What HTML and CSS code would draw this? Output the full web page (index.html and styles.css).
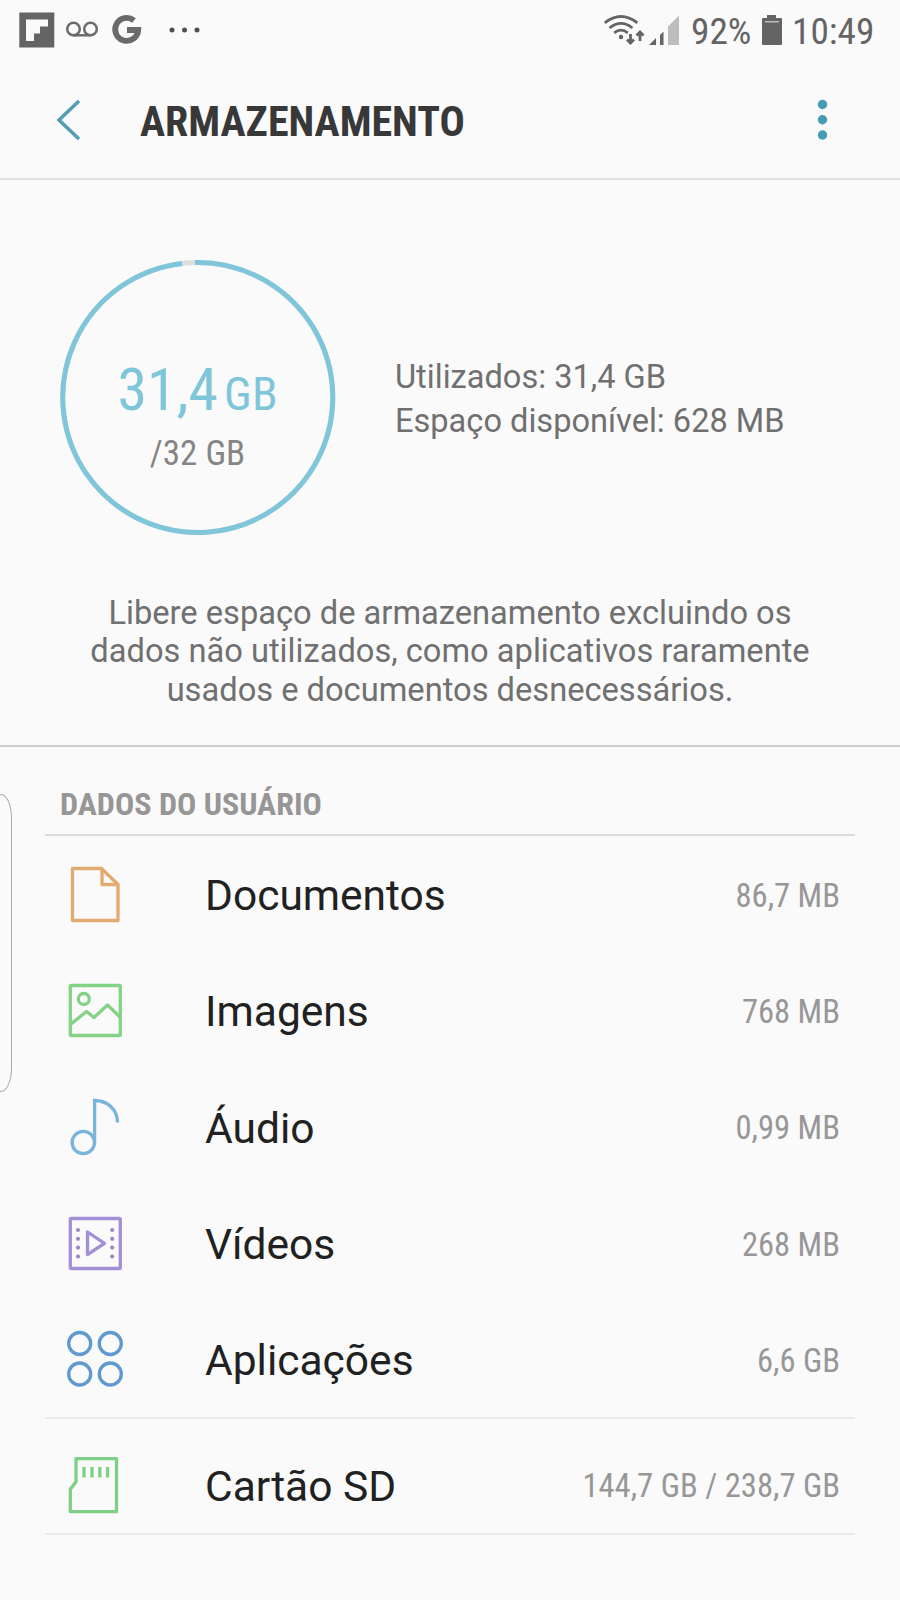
FILE: index.html
```html
<!DOCTYPE html>
<html lang="pt-BR">
<head>
<meta charset="utf-8">
<title>Armazenamento</title>
<link rel="stylesheet" href="styles.css">
</head>
<body>
<div class="screen">
  <header class="status">
    <svg class="status-left" width="210" height="60" viewBox="0 0 210 60">
      <path fill="#646464" fill-rule="evenodd" d="M19.300 12.500h35v35h-35zM26 19.500v21.500h8v-7.500h6v-7h8v-7z"/>
      <g fill="none" stroke="#6b6b6b" stroke-width="2.500"><circle cx="73.500" cy="29" r="6.300"/><circle cx="90.500" cy="29" r="6.300"/><path d="M73 35.300h18"/></g>
      <path fill="none" stroke="#6a6a6a" stroke-width="5.800" d="M134 20.500A11.500 11.500 0 1 0 138.200 30H127"/>
      <g fill="#505050"><circle cx="172" cy="30" r="2.500"/><circle cx="184.500" cy="30" r="2.500"/><circle cx="197" cy="30" r="2.500"/></g>
    </svg>
    <div class="status-right">
      <svg width="90" height="60" viewBox="600 0 90 60">
        <g fill="none" stroke="#646464" stroke-width="2.800">
          <path d="M604.800 22.800Q621 10.200 637.300 22.800M609.500 28Q621 18.800 632.500 28M614.200 32.800Q621 27.500 627.800 32.800"/>
          <path d="M630.500 34v9M627 39.500l3.500 3.500 3.500-3.500M640 41v-9M636.500 35.500l3.500-3.500 3.500 3.500"/>
        </g>
        <circle cx="621" cy="37" r="2.200" fill="#646464"/>
        <path fill="#646464" d="M649 45h7v-7zM660 45h3.500V31.500L660 35z"/>
        <path fill="#bdbdbd" d="M668 45h11V15.500l-11 11z"/>
      </svg>
      <span class="cond battery-text">92%</span>
      <svg class="battery" width="20" height="30" viewBox="0 0 20 30"><path fill="#646464" d="M5 0h9v3h5a1 1 0 0 1 1 1v25a1 1 0 0 1-1 1H1a1 1 0 0 1-1-1V4a1 1 0 0 1 1-1h4z"/><path fill="#bbb" d="M3 6h14v1.500H3z"/></svg>
      <span class="cond clock">10:49</span>
    </div>
  </header>
  <nav class="appbar">
    <svg class="back" width="30" height="44" viewBox="0 0 30 44"><path d="M24 3 4 22l20 19" fill="none" stroke="#529fb4" stroke-width="3.500"/></svg>
    <h1 class="cond title">ARMAZENAMENTO</h1>
    <svg class="more" width="12" height="44" viewBox="0 0 12 44" fill="#469bb5"><circle cx="6.500" cy="6.500" r="4.700"/><circle cx="6.500" cy="21.700" r="4.700"/><circle cx="6.500" cy="37" r="4.700"/></svg>
  </nav>
  <section class="summary">
    <div class="usage">
      <div class="ring">
        <svg class="ring-art" width="277" height="277" viewBox="-0.500 -0.500 277 277" fill="none" stroke-width="5">
          <circle cx="138" cy="138" r="135" stroke="#dedede"/>
          <path d="M135.500 3A135 135 0 1 1 122.500 3.900" stroke="#80c6da"/>
        </svg>
        <div class="cond used"><span class="used-num">31,4</span><span class="used-unit">GB</span></div>
        <div class="cond total">/32 GB</div>
      </div>
      <div class="facts"><div class="fact">Utilizados: 31,4 GB</div><div class="fact">Espaço disponível: 628 MB</div></div>
    </div>
    <p class="hint">Libere espaço de armazenamento excluindo os<br>dados não utilizados, como aplicativos raramente<br>usados e documentos desnecessários.</p>
  </section>
  <main class="data">
    <h2 class="section-title"><span class="cond">DADOS DO USUÁRIO</span></h2>
    <div class="row"><svg class="icon" width="60" height="60" viewBox="65 865 60 60" fill="none" stroke="#e2aa70" stroke-width="3.300"><path stroke-linejoin="round" d="M73 868.500h28.500l16.500 16V920.500H72.500V868.500zM102 869v15.500h15.500"/></svg><span class="name">Documentos</span><span class="cond size">86,7 MB</span></div>
    <div class="row"><svg class="icon" width="60" height="60" viewBox="65 981 60 60" fill="none" stroke="#83d286" stroke-width="3.300"><rect x="70.300" y="985.500" width="50" height="50" rx="1"/><circle cx="83.800" cy="999" r="5.500"/><path stroke-linejoin="round" d="M71 1024l15.500-12.500 7.500 6 13.500-12.500 12.500 12"/></svg><span class="name">Imagens</span><span class="cond size">768 MB</span></div>
    <div class="row"><svg class="icon" width="60" height="60" viewBox="65 1098 60 60" fill="none" stroke="#78b4db" stroke-width="3.300"><circle cx="83.300" cy="1142.500" r="11.200"/><path d="M94.600 1143V1100.500C107 1100.500 117.500 1109 117.500 1122.500"/></svg><span class="name">Áudio</span><span class="cond size">0,99 MB</span></div>
    <div class="row"><svg class="icon" width="60" height="60" viewBox="65 1214 60 60"><g fill="none" stroke="#a28fd7" stroke-width="3.300" stroke-linejoin="round"><rect x="70.300" y="1218.500" width="50" height="50" rx="1"/><path d="M87.500 1232v22.500l17-11.200z"/></g><g fill="#9b8abd"><circle cx="78" cy="1230" r="2.100"/><circle cx="78" cy="1238.800" r="2.100"/><circle cx="78" cy="1247.600" r="2.100"/><circle cx="78" cy="1256.500" r="2.100"/><circle cx="112.200" cy="1230" r="2.100"/><circle cx="112.200" cy="1238.800" r="2.100"/><circle cx="112.200" cy="1247.600" r="2.100"/><circle cx="112.200" cy="1256.500" r="2.100"/></g></svg><span class="name">Vídeos</span><span class="cond size">268 MB</span></div>
    <div class="row"><svg class="icon" width="60" height="60" viewBox="65 1330.500 60 60" fill="none" stroke="#6099d0" stroke-width="3.300"><circle cx="79.700" cy="1344" r="11"/><circle cx="110.300" cy="1344" r="11"/><circle cx="79.700" cy="1374.500" r="11"/><circle cx="110.300" cy="1374.500" r="11"/></svg><span class="name">Aplicações</span><span class="cond size">6,6 GB</span></div>
    <div class="row row-sd"><svg class="icon" width="60" height="60" viewBox="65 1456 60 60" fill="none" stroke="#7fcf86" stroke-width="3.300"><path stroke-linejoin="round" d="M76 1458.700h40.500v53H70.300v-22.500l5.700-7.500z"/><path d="M84 1467v10.500M92 1467v10.500M99.800 1467v10.500M107.500 1467v10.500"/></svg><span class="name">Cartão SD</span><span class="cond size">144,7 GB / 238,7 GB</span></div>
  </main>
  <div class="edge-handle"></div>
</div>
</body>
</html>
```
FILE: styles.css
```css
* { box-sizing: border-box; }
body { margin: 0; background: #fafafa; font-family: Roboto, "Liberation Sans", sans-serif; }
.screen { position: relative; width: 900px; height: 1600px; overflow: hidden; display: flex; flex-direction: column; }
.cond { font-family: "Roboto Condensed", Roboto, sans-serif; font-stretch: 75%; white-space: nowrap; }
h1, h2, p { margin: 0; font-weight: normal; }
svg { display: block; flex: none; }
.status { height: 60px; display: flex; justify-content: space-between; color: #646464; font-size: 37.300px; line-height: 63px; }
.status-right { display: flex; width: 300px; }
.battery-text { width: 72px; padding-left: 1px; }
.battery { margin-top: 15px; }
.clock { margin-left: 10px; }
.appbar { height: 120px; display: flex; align-items: center; padding: 2px 72px 0 55px; border-bottom: 2px solid #e2e2e2; }
.title { flex: 1; margin-left: 55px; font-size: 42px; font-weight: 700; color: #383838; line-height: 50px; padding-top: 3px; }
.summary { height: 567px; border-bottom: 2px solid #cecece; padding: 79px 0 0; }
.usage { display: flex; padding-left: 59px; }
.ring { position: relative; width: 277px; height: 276px; padding-top: 96px; text-align: center; }
.ring-art { position: absolute; left: 0; top: 0; }
.used { color: #80c6da; height: 70px; line-height: 70px; display: flex; justify-content: center; align-items: baseline; gap: 6px; }
.used-num { font-size: 60px; }
.used-unit { font-size: 47px; }
.total { color: #858585; font-size: 35px; line-height: 40px; margin-top: 9px; }
.facts { margin-left: 59px; padding-top: 96px; color: #707070; font-size: 32.600px; line-height: 44px; white-space: nowrap; }
.hint { margin-top: 59px; text-align: center; color: #707070; font-size: 32.650px; line-height: 38.300px; white-space: nowrap; }
.data { padding: 0 45px; }
.section-title { height: 89px; border-bottom: 2px solid #dcdcdc; padding: 37px 0 0 15px; font-size: 32px; font-weight: 700; line-height: 40px; color: #969696; }
.row { height: 116.300px; padding: 2px 15px 0 20px; display: flex; align-items: center; }
.name { margin-left: 80px; flex: 1; font-size: 42.500px; line-height: 50px; color: #212121; padding-top: 2px; }
.size { font-size: 32.600px; line-height: 40px; color: #979797; padding-top: 1px; }
.row-sd { height: 118px; border-top: 2px solid #ebebeb; border-bottom: 2px solid #ebebeb; padding-top: 19px; }
.edge-handle { position: absolute; left: -14px; top: 794px; width: 26px; height: 298px; border: 1.500px solid #aaa; border-radius: 11px / 24px; }
```
